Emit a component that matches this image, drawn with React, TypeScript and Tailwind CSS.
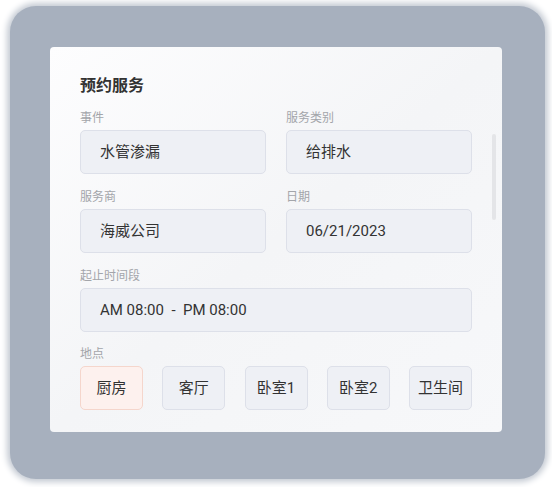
const font = { fontFamily: 'Roboto, "Noto Sans CJK SC", sans-serif' };

const Field = ({ label, value, className = '' }: { label: string; value: string; className?: string }) => (
  <div className={className}>
    <div className="h-4 text-[12px] leading-4 text-[#a3a5aa]">{label}</div>
    <div className="mt-1 h-[44px] rounded-[5px] border border-[#dde0e9] bg-[#eef0f5] pl-[19px] flex items-center text-[15px] text-[#333]">
      {value}
    </div>
  </div>
);

const places = ['厨房', '客厅', '卧室1', '卧室2', '卫生间'];

export default function App() {
  return (
    <div className="w-[552px] h-[487px] bg-white overflow-hidden" style={font}>
      <div className="ml-[10px] mt-[6px] w-[535px] h-[473px] rounded-[26px] bg-[#a7b0be] shadow-[0_0_6px_3px_#c3c9d2] pl-[40px] pt-[41px]">
        <div className="relative w-[452px] h-[385px] rounded-[4px] bg-gradient-to-br from-[#fdfdfe] via-[#f4f5f7] to-[#f7f8fa] px-[30px] pt-[29px]">
          <h1 className="h-5 text-[16px] leading-5 font-bold text-[#333]">预约服务</h1>

          <div className="mt-[14px] grid grid-cols-2 gap-x-[20px]">
            <Field label="事件" value="水管渗漏" />
            <Field label="服务类别" value="给排水" />
            <Field label="服务商" value="海威公司" className="mt-[15px]" />
            <Field label="日期" value="06/21/2023" className="mt-[15px]" />
          </div>

          <Field label="起止时间段" value="AM 08:00  -  PM 08:00" className="mt-[15px] whitespace-pre" />

          <div className="mt-[14px]">
            <div className="h-4 text-[12px] leading-4 text-[#a3a5aa]">地点</div>
            <div className="mt-1 flex justify-between">
              {places.map((p, i) => (
                <div
                  key={p}
                  className={
                    i === 0
                      ? 'w-[63px] h-[44px] rounded-[5px] border border-[#f5d6cc] bg-[#fdf1ee] flex items-center justify-center text-[15px] text-[#333]'
                      : 'w-[63px] h-[44px] rounded-[5px] border border-[#dde0e9] bg-[#eef0f5] flex items-center justify-center text-[15px] text-[#333]'
                  }
                >
                  {p}
                </div>
              ))}
            </div>
          </div>

          {/* scrollbar */}
          <div className="absolute right-[6px] top-[87px] w-[4px] h-[86px] rounded-full bg-[#e4e5e8]" />
        </div>
      </div>
    </div>
  );
}
